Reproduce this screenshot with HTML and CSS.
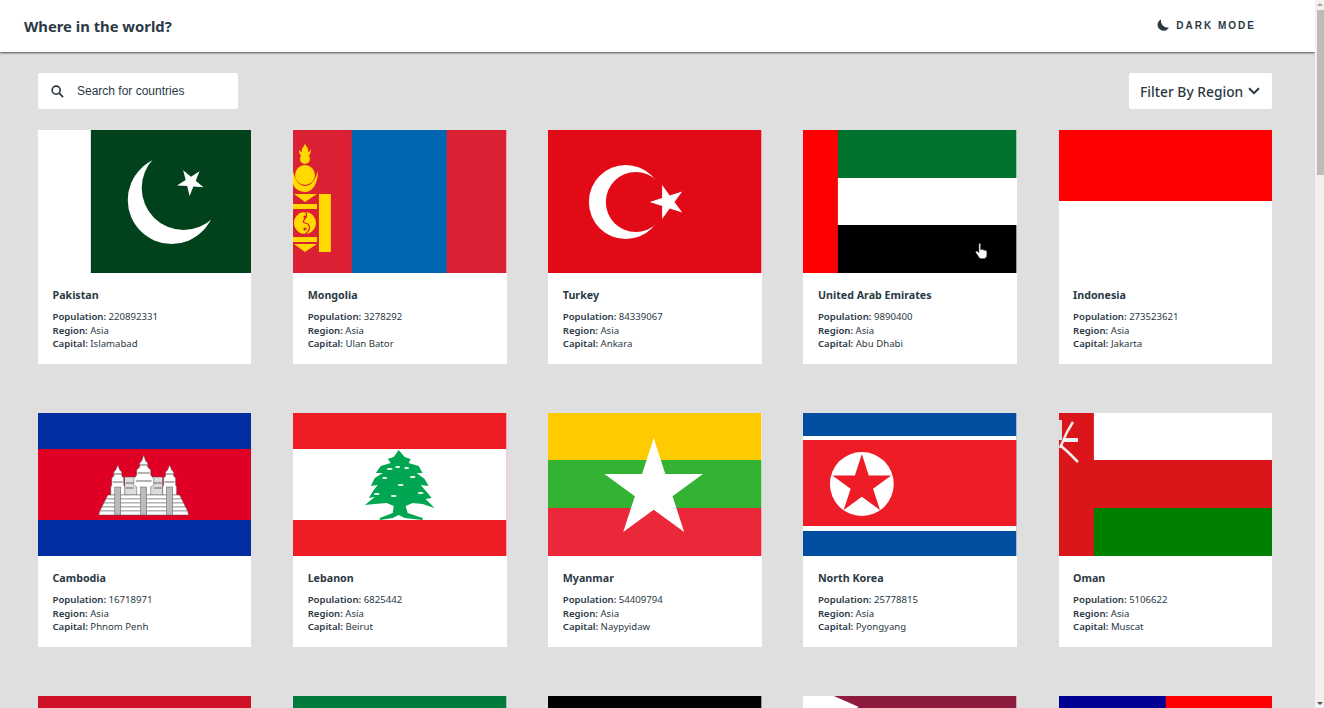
FILE: index.html
```html
<!DOCTYPE html>
<html lang="en">
<head>
    <meta charset="UTF-8">
    <meta name="viewport" content="width=device-width, initial-scale=1.0">
    <title>Where in the world?</title>
    <link rel="stylesheet" href="styles.css">
</head>
<body>
    <svg class="defs" width="0" height="0">
        <defs>
            <polygon id="star" points="0,-1 .2245,-.309 .951,-.309 .363,.118 .588,.809 0,.382 -.588,.809 -.363,.118 -.951,-.309 -.2245,-.309"/>
        </defs>
    </svg>

    <div class="page">
        <header class="header">
            <div class="logo">Where in the world?</div>
            <div class="theme-toggle">
                <svg class="moon" viewBox="0 0 12 12"><path d="M4.2 0.2A6 6 0 1 0 11.9 8.4 6.6 6.6 0 0 1 4.2 0.2Z"/></svg>
                <span>DARK MODE</span>
            </div>
        </header>

        <main class="content">
            <div class="toolbar">
                <div class="search">
                    <svg class="search-icon" viewBox="0 0 14 14"><circle cx="5.6" cy="5.6" r="4.3"/><path d="M8.8 8.8L13 13"/></svg>
                    <span>Search for countries</span>
                </div>
                <div class="filter">
                    <span>Filter By Region</span>
                    <svg class="chevron" viewBox="0 0 12 8"><path d="M1 1.2L6 6.2L11 1.2"/></svg>
                </div>
            </div>

            <div class="grid">
                <div class="card">
                    <svg class="flag" viewBox="0 0 214 143" preserveAspectRatio="none">
                        <rect width="214" height="143" fill="#fff"/>
                        <rect x="53" width="161" height="143" fill="#01411c"/>
                        <circle cx="134" cy="70" r="44" fill="#fff"/>
                        <circle cx="146" cy="58" r="42" fill="#01411c"/>
                        <use href="#star" fill="#fff" transform="translate(153 52) rotate(40) scale(14)"/>
                    </svg>
                    <div class="card-body">
                        <h2>Pakistan</h2>
                        <p><b>Population:</b> 220892331</p>
                        <p><b>Region:</b> Asia</p>
                        <p><b>Capital:</b> Islamabad</p>
                    </div>
                </div>

                <div class="card">
                    <svg class="flag" viewBox="0 0 214 143" preserveAspectRatio="none">
                        <rect width="214" height="143" fill="#da2032"/>
                        <rect x="59" width="95" height="143" fill="#0066b2"/>
                        <g fill="#ffd900">
                            <path d="M12 14C15 18 16 20 15 22 17 22 17 20 18 19 18 24 16 27 12 27 8 27 6 24 6 20 7 21 8 22 9 22 8 19 10 18 12 14Z"/>
                            <circle cx="12" cy="29" r="5"/>
                            <circle cx="12" cy="45" r="10"/>
                            <path d="M0 41C2 51 7 56 12 56 18 56 22 51 25 41 25 55 19 62 12 62 6 62 1 58 0 54Z"/>
                            <polygon points="1,64 24,64 12,72"/>
                            <rect y="74" width="24" height="5"/>
                            <circle cx="12" cy="93" r="11"/>
                            <rect y="107" width="24" height="5"/>
                            <polygon points="1,114 24,114 12,122"/>
                            <rect x="26" y="64" width="12" height="58"/>
                        </g>
                        <path d="M12 82C18 86 6 92 12 93S18 100 12 104" fill="none" stroke="#da2032" stroke-width="1.2"/>
                        <circle cx="12" cy="87" r="1.6" fill="#da2032"/>
                        <circle cx="12" cy="99" r="1.6" fill="#da2032"/>
                    </svg>
                    <div class="card-body">
                        <h2>Mongolia</h2>
                        <p><b>Population:</b> 3278292</p>
                        <p><b>Region:</b> Asia</p>
                        <p><b>Capital:</b> Ulan Bator</p>
                    </div>
                </div>

                <div class="card">
                    <svg class="flag" viewBox="0 0 214 143" preserveAspectRatio="none">
                        <rect width="214" height="143" fill="#e30a17"/>
                        <circle cx="78" cy="72" r="37" fill="#fff"/>
                        <circle cx="88" cy="72" r="30" fill="#e30a17"/>
                        <use href="#star" fill="#fff" transform="translate(120 72) rotate(-90) scale(18)"/>
                    </svg>
                    <div class="card-body">
                        <h2>Turkey</h2>
                        <p><b>Population:</b> 84339067</p>
                        <p><b>Region:</b> Asia</p>
                        <p><b>Capital:</b> Ankara</p>
                    </div>
                </div>

                <div class="card">
                    <svg class="flag" viewBox="0 0 214 143" preserveAspectRatio="none">
                        <rect width="214" height="48" fill="#00732f"/>
                        <rect y="48" width="214" height="47" fill="#fff"/>
                        <rect y="95" width="214" height="48" fill="#000"/>
                        <rect width="35" height="143" fill="#f00"/>
                        <path d="M176.500 114.500C176.500 113 178 113 178 114.500V120C179 119 181 119.500 181.500 120.500 182.500 120 184.300 120.800 184.300 122V125C184.300 127 183 128.500 181.500 128.500H178.500C177 128.500 176.500 127.500 175.800 126L173.300 122.500C173 121.500 174.500 120.800 175.300 121.800L176.500 123Z" fill="#fff" stroke="#666" stroke-width=".6"/>
                    </svg>
                    <div class="card-body">
                        <h2>United Arab Emirates</h2>
                        <p><b>Population:</b> 9890400</p>
                        <p><b>Region:</b> Asia</p>
                        <p><b>Capital:</b> Abu Dhabi</p>
                    </div>
                </div>

                <div class="card">
                    <svg class="flag" viewBox="0 0 214 143" preserveAspectRatio="none">
                        <rect width="214" height="143" fill="#fff"/>
                        <rect width="214" height="71" fill="#f00"/>
                    </svg>
                    <div class="card-body">
                        <h2>Indonesia</h2>
                        <p><b>Population:</b> 273523621</p>
                        <p><b>Region:</b> Asia</p>
                        <p><b>Capital:</b> Jakarta</p>
                    </div>
                </div>

                <div class="card">
                    <svg class="flag" viewBox="0 0 214 143" preserveAspectRatio="none">
                        <rect width="214" height="143" fill="#032ea1"/>
                        <rect y="36" width="214" height="71" fill="#e00025"/>
                        <g fill="#fff" stroke="#555" stroke-width=".5">
                            <rect x="87" y="64" width="38" height="18" fill="#ddd"/>
                            <polygon points="106,42 108,48 110,50 110,54 113,57 113,62 116,66 116,72 113,74 113,82 99,82 99,74 96,72 96,66 99,62 99,57 102,54 102,50 104,48"/>
                            <polygon points="80,52 82,57 84,59 84,63 86,65 86,72 87,74 87,82 73,82 73,74 74,72 74,65 76,63 76,59 78,57"/>
                            <polygon points="132,52 134,57 136,59 136,63 138,65 138,72 139,74 139,82 125,82 125,74 126,72 126,65 128,63 128,59 130,57"/>
                            <polygon points="70,82 142,82 144,86 68,86"/>
                            <polygon points="68,86 144,86 146,90 66,90"/>
                            <polygon points="66,90 146,90 148,94 64,94"/>
                            <polygon points="64,94 148,94 150,98 62,98"/>
                            <polygon points="62,98 150,98 151,102 61,102"/>
                            <rect x="77" y="74" width="6" height="28" fill="#bbb"/>
                            <rect x="103" y="74" width="6" height="28" fill="#bbb"/>
                            <rect x="129" y="74" width="6" height="28" fill="#bbb"/>
                        </g>
                        <path d="M102 52H110M100 60H112M98 68H114M76 61H84M75 69H85M128 61H136M127 69H137M88 70H96M88 75H96M116 70H124M116 75H124" stroke="#666" stroke-width="1" fill="none"/>
                    </svg>
                    <div class="card-body">
                        <h2>Cambodia</h2>
                        <p><b>Population:</b> 16718971</p>
                        <p><b>Region:</b> Asia</p>
                        <p><b>Capital:</b> Phnom Penh</p>
                    </div>
                </div>

                <div class="card">
                    <svg class="flag" viewBox="0 0 214 143" preserveAspectRatio="none">
                        <rect width="214" height="143" fill="#ee1c25"/>
                        <rect y="36" width="214" height="71" fill="#fff"/>
                        <path d="M106 37L112 44 118 46 116 50 126 53 130 60 124 60 132 66 136 73 128 72 135 80 139 85 133 86 142 95 130 91 120 90 113 93 115 100 130 105 130 107 112 105 106 102 100 105 87 107 87 105 100 100 101 93 94 90 82 91 72 92 82 84 76 85 81 77 85 72 78 73 82 65 90 60 83 60 88 53 98 50 95 46 101 44Z" fill="#00a651"/>
                        <g fill="#fff">
                            <ellipse cx="97" cy="56" rx="3" ry="1"/>
                            <ellipse cx="105" cy="54" rx="2.500" ry="1"/>
                            <ellipse cx="114" cy="55" rx="2.500" ry="1"/>
                            <ellipse cx="92" cy="65" rx="2.500" ry="1"/>
                            <ellipse cx="108" cy="72" rx="3" ry="1"/>
                            <ellipse cx="120" cy="64" rx="3" ry="1"/>
                            <ellipse cx="84" cy="81" rx="3" ry="1"/>
                            <ellipse cx="128" cy="80" rx="3" ry="1"/>
                            <ellipse cx="101" cy="83" rx="3" ry="1"/>
                        </g>
                    </svg>
                    <div class="card-body">
                        <h2>Lebanon</h2>
                        <p><b>Population:</b> 6825442</p>
                        <p><b>Region:</b> Asia</p>
                        <p><b>Capital:</b> Beirut</p>
                    </div>
                </div>

                <div class="card">
                    <svg class="flag" viewBox="0 0 214 143" preserveAspectRatio="none">
                        <rect width="214" height="47" fill="#fecb00"/>
                        <rect y="47" width="214" height="48" fill="#34b233"/>
                        <rect y="95" width="214" height="48" fill="#ea2839"/>
                        <use href="#star" fill="#fff" transform="translate(106 77) scale(52)"/>
                    </svg>
                    <div class="card-body">
                        <h2>Myanmar</h2>
                        <p><b>Population:</b> 54409794</p>
                        <p><b>Region:</b> Asia</p>
                        <p><b>Capital:</b> Naypyidaw</p>
                    </div>
                </div>

                <div class="card">
                    <svg class="flag" viewBox="0 0 214 143" preserveAspectRatio="none">
                        <rect width="214" height="143" fill="#024fa2"/>
                        <rect y="23" width="214" height="95" fill="#fff"/>
                        <rect y="27" width="214" height="86" fill="#ed1c27"/>
                        <circle cx="59" cy="71" r="32" fill="#fff"/>
                        <use href="#star" fill="#ed1c27" transform="translate(59 72) scale(31)"/>
                    </svg>
                    <div class="card-body">
                        <h2>North Korea</h2>
                        <p><b>Population:</b> 25778815</p>
                        <p><b>Region:</b> Asia</p>
                        <p><b>Capital:</b> Pyongyang</p>
                    </div>
                </div>

                <div class="card">
                    <svg class="flag" viewBox="0 0 214 143" preserveAspectRatio="none">
                        <rect width="214" height="143" fill="#db161b"/>
                        <rect x="35" width="179" height="47" fill="#fff"/>
                        <rect x="35" y="95" width="179" height="48" fill="#008000"/>
                        <path d="M14 9L8 19 1 35" fill="none" stroke="#eee" stroke-width="2.500"/>
                        <path d="M1 32L10 40 19 49" fill="none" stroke="#eee" stroke-width="2.500"/>
                        <rect x="4" y="25" width="15" height="4" fill="#f2f2f2"/>
                        <rect y="7" width="3" height="20" fill="#ddd"/>
                    </svg>
                    <div class="card-body">
                        <h2>Oman</h2>
                        <p><b>Population:</b> 5106622</p>
                        <p><b>Region:</b> Asia</p>
                        <p><b>Capital:</b> Muscat</p>
                    </div>
                </div>

                <div class="card">
                    <svg class="flag" viewBox="0 0 214 143" preserveAspectRatio="none"><rect width="214" height="143" fill="#ce1126"/></svg>
                </div>
                <div class="card">
                    <svg class="flag" viewBox="0 0 214 143" preserveAspectRatio="none"><rect width="214" height="143" fill="#007a3d"/></svg>
                </div>
                <div class="card">
                    <svg class="flag" viewBox="0 0 214 143" preserveAspectRatio="none"><rect width="214" height="143" fill="#000"/></svg>
                </div>
                <div class="card">
                    <svg class="flag" viewBox="0 0 214 143" preserveAspectRatio="none">
                        <rect width="214" height="143" fill="#8d1b3d"/>
                        <polygon points="0,0 31,0 56,11 31,22 56,33 0,33" fill="#fff"/>
                    </svg>
                </div>
                <div class="card">
                    <svg class="flag" viewBox="0 0 214 143" preserveAspectRatio="none">
                        <rect width="214" height="143" fill="#f00"/>
                        <rect width="107" height="71" fill="#000095"/>
                    </svg>
                </div>
            </div>
        </main>
    </div>

    <div class="scrollbar">
        <div class="arrow-up"></div>
        <div class="thumb"></div>
        <div class="arrow-down"></div>
    </div>
</body>
</html>
```
FILE: styles.css
```css
* {
    box-sizing: border-box;
}

body {
    font-family: "Noto Sans", Arial, sans-serif;
    margin: 0;
    height: 708px;
    overflow: hidden;
    display: flex;
    background-color: #dfdfdf;
    color: #2b3945;
}

.defs {
    display: none;
}

.page {
    flex: 1;
    min-width: 0;
    height: 708px;
    overflow: hidden;
}

.header {
    position: relative;
    height: 52px;
    padding: 0 59px 0 24px;
    display: flex;
    align-items: center;
    justify-content: space-between;
    background-color: #ffffff;
    box-shadow: 0 1px 2px rgba(0, 0, 0, 0.65);
}

.logo {
    font-size: 14.8px;
    font-weight: 700;
}

.theme-toggle {
    display: flex;
    align-items: center;
    gap: 7px;
    margin-bottom: 2px;
    font-family: "Liberation Sans", Arial, sans-serif;
    font-size: 10px;
    font-weight: 700;
    letter-spacing: 2px;
}

.moon {
    width: 12px;
    height: 12px;
    fill: #2b3945;
}

.content {
    padding: 21px 43px 0 38px;
}

.toolbar {
    display: flex;
    justify-content: space-between;
    margin-bottom: 21px;
}

.search {
    width: 200px;
    height: 36px;
    display: flex;
    align-items: center;
    gap: 13px;
    padding-left: 13px;
    background-color: #ffffff;
    border-radius: 2px;
    font-family: "Liberation Sans", Arial, sans-serif;
    font-size: 12px;
}

.search-icon {
    width: 13px;
    height: 13px;
    fill: none;
    stroke: #2b3945;
    stroke-width: 1.8;
}

.filter {
    width: 143px;
    height: 36px;
    display: flex;
    align-items: center;
    gap: 5px;
    padding-left: 11px;
    background-color: #ffffff;
    border-radius: 2px;
    font-size: 13.8px;
    font-weight: 500;
}

.chevron {
    width: 12px;
    height: 8px;
    fill: none;
    stroke: #2b3945;
    stroke-width: 2;
}

.grid {
    display: grid;
    grid-template-columns: repeat(5, 213.4px);
    justify-content: space-between;
    row-gap: 49px;
}

.card {
    height: 234px;
    background-color: #ffffff;
}

.flag {
    display: block;
    width: 100%;
    height: 143px;
}

.card-body {
    padding: 14px 14.5px 0;
}

.card-body h2 {
    margin: 0 0 7px;
    font-size: 10.7px;
    font-weight: 700;
    line-height: 16px;
}

.card-body p {
    margin: 0;
    font-size: 9.6px;
    line-height: 13.5px;
}

.card-body b {
    font-weight: 600;
}

.scrollbar {
    width: 9px;
    height: 708px;
    display: flex;
    flex-direction: column;
    align-items: flex-end;
    background-color: #f1f1f1;
}

.arrow-up {
    margin: 3px 1px 0 0;
    border-left: 3px solid transparent;
    border-right: 3px solid transparent;
    border-bottom: 3px solid #a3a3a3;
}

.thumb {
    width: 7px;
    height: 165px;
    margin-top: 4px;
    background-color: #bcbcbc;
}

.arrow-down {
    margin: auto 1px 3px 0;
    border-left: 3px solid transparent;
    border-right: 3px solid transparent;
    border-top: 3px solid #505050;
}
```
